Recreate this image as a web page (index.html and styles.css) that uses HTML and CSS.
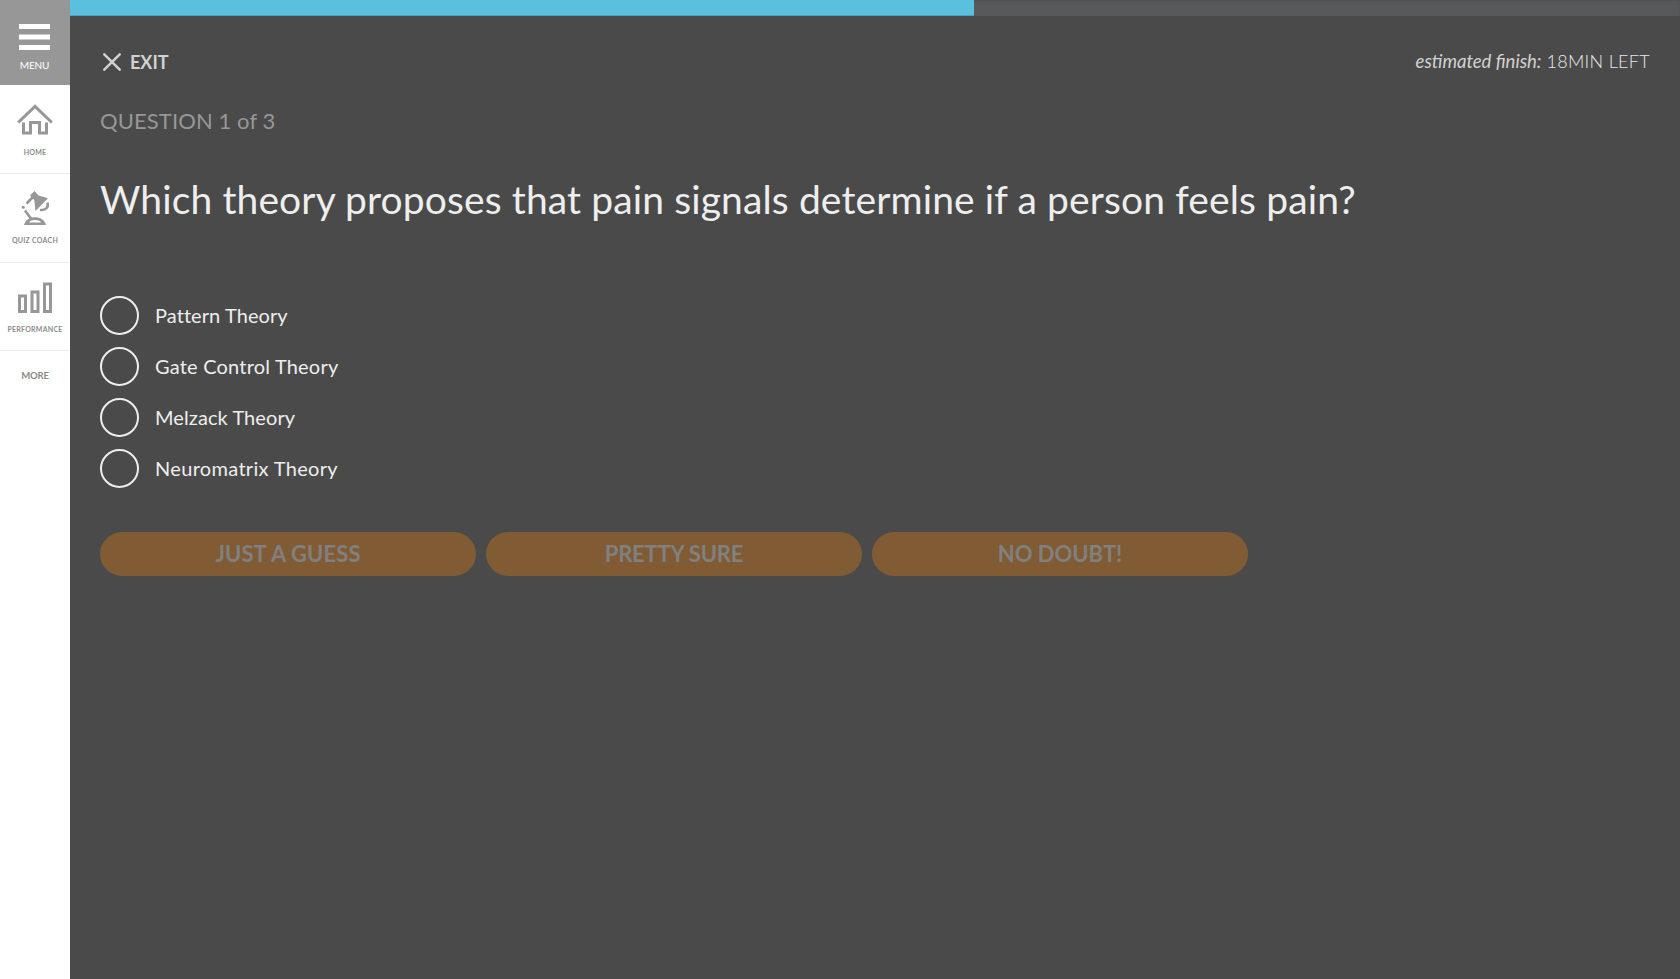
FILE: index.html
```
<!DOCTYPE html>
<html lang="en">
<head>
<meta charset="utf-8">
<title>Quiz</title>
<link rel="stylesheet" href="styles.css">
</head>
<body>
<div class="app">
  <nav class="sidebar">
    <a class="menu">
      <svg width="31" height="27" viewBox="0 0 31 27"><path d="M0 0h31v5H0zM0 10.500h31v5H0zM0 21h31v5H0z" fill="#fff"/></svg>
      <span class="menu-label">MENU</span>
    </a>
    <a class="item item-home">
      <svg width="36" height="32" viewBox="0 0 36 32" fill="none" stroke="#979797" stroke-width="3"><path d="M1.200 18.500 18 2.300 34.800 18.500"/><path d="M6.500 18.500v10.500h7V18.500h9V29h7V18.500"/></svg>
      <span class="item-label">HOME</span>
    </a>
    <a class="item item-coach">
      <svg width="36" height="36" viewBox="0 0 36 36" fill="none" stroke="#979797"><path d="M13 4.500 17.500 0l4 4.500L31 7.200 18.500 20 17.300 9z" fill="#979797" stroke="none"/><path d="M15.500 6.500 9.500 12.500" stroke-width="2.600"/><circle cx="6.200" cy="16.300" r="1.500" fill="#979797" stroke="none"/><path d="M8 19.500 14 27.500" stroke-width="2.600"/><path d="M30.500 11.500c1.500 5-2 8-7.500 7.500" stroke-width="2.500"/><path d="M7 34C9 23.500 27 23.500 29 34z" fill="#979797" stroke="none"/><path d="M12 31.500c2.500-3.200 9.500-3.200 12 0z" fill="#fff" stroke="none"/></svg>
      <span class="item-label">QUIZ COACH</span>
    </a>
    <a class="item">
      <svg width="36" height="32" viewBox="0 0 36 32" fill="none" stroke="#979797" stroke-width="3"><path d="M2.500 14h6v15.500h-6zM15 10h6v19.500h-6zM27.500 2h6v27.500h-6z"/></svg>
      <span class="item-label">PERFORMANCE</span>
    </a>
    <a class="more">MORE</a>
  </nav>
  <main class="main">
    <div class="progress"><div class="bar" style="width:56.150%"></div></div>
    <header class="top">
      <a class="exit"><svg width="18" height="18" viewBox="0 0 18 18" stroke="#d2d2d2" stroke-width="2.500" stroke-linecap="round"><path d="M1.300 1.300 16.700 16.700M16.700 1.300 1.300 16.700"/></svg><span class="exit-label">EXIT</span></a>
      <div class="finish"><em class="estimate">estimated finish:</em><span class="left">18MIN LEFT</span></div>
    </header>
    <div class="count">QUESTION 1 of 3</div>
    <h1 class="question">Which theory proposes that pain signals determine if a person feels pain?</h1>
    <ul class="options">
      <li><i class="radio"></i><span class="pattern">Pattern Theory</span></li>
      <li><i class="radio"></i><span class="gate">Gate Control Theory</span></li>
      <li><i class="radio"></i><span class="melzack">Melzack Theory</span></li>
      <li><i class="radio"></i><span class="neuromatrix">Neuromatrix Theory</span></li>
    </ul>
    <div class="actions">
      <button class="guess">JUST A GUESS</button>
      <button class="sure">PRETTY SURE</button>
      <button class="certain">NO DOUBT!</button>
    </div>
  </main>
</div>
</body>
</html>
```
FILE: styles.css
```
* { box-sizing: border-box; }
body { margin: 0; font-family: Lato, "Open Sans", sans-serif; background: #4a4a4a; }
.app { display: flex; height: 979px; overflow: hidden; }
.sidebar { width: 70px; flex: none; background: #fff; display: flex; flex-direction: column; color: #8b8b8b; }
.menu { height: 85px; background: #979797; display: flex; flex-direction: column; align-items: center; padding: 24px 1px 0 0; color: #fff; }
.menu-label { font-size: 10px; line-height: 12px; margin-top: 8px; letter-spacing: -.2px; }
.item { height: 88.500px; border-bottom: 1px solid #ebebeb; display: flex; flex-direction: column; align-items: center; justify-content: space-between; padding: 19px 0 16.500px; }
.item-home { height: 89px; }
.item-coach { padding-top: 17px; }
.item-label { font-size: 7px; line-height: 10px; font-weight: 700; letter-spacing: .25px; white-space: nowrap; }
.more { font-size: 9.500px; line-height: 12px; text-align: center; padding-top: 19px; font-weight: 700; letter-spacing: -.2px; }
.main { flex: 1; min-width: 0; }
.progress { height: 16px; background: #58595b; box-shadow: inset 0 1px 2px rgba(0,0,0,.1); }
.bar { height: 16px; background: #5bc0de; box-shadow: inset 0 -1px 0 rgba(0,0,0,.15); }
.top { display: flex; justify-content: space-between; padding: 36px 30px 0 33px; height: 84px; color: #d2d2d2; }
.exit { display: flex; gap: 9px; height: 20px; align-items: center; }
.exit-label { font-size: 18px; line-height: 20px; font-weight: 700; }
.finish { display: flex; align-items: baseline; height: 20px; gap: 5px; margin-top: -1px; line-height: 20px; }
.estimate { font-size: 18.500px; }
.left { font-size: 18px; font-weight: 300; letter-spacing: .3px; color: #e8e8e8; }
.count { padding: 7px 30px 0; font-size: 22px; line-height: 28px; letter-spacing: .1px; color: #979797; }
.question { margin: 0; padding: 40px 30px 0; font-size: 39px; line-height: 48px; font-weight: 400; letter-spacing: .12px; color: #eee; white-space: nowrap; }
.options { list-style: none; margin: 0; padding: 72.500px 30px 0; }
.options li { display: flex; align-items: center; gap: 16px; height: 39px; margin-bottom: 12.330px; font-size: 20px; color: #eee; }
.options span { padding-bottom: 1px; }
.pattern { letter-spacing: .08px; }
.gate { letter-spacing: .2px; }
.melzack { letter-spacing: .08px; }
.neuromatrix { letter-spacing: .32px; }
.radio { width: 39px; height: 39px; border: 2px solid #eee; border-radius: 50%; }
.actions { display: flex; gap: 10px; padding: 31.200px 30px 0; }
.actions button { width: 376px; height: 44px; border: 0; border-radius: 22px; background: #815b34; color: #808080; font: 700 22px/44px Lato, sans-serif; padding: 0; }
.actions .guess { letter-spacing: .1px; }
.actions .sure { letter-spacing: -.2px; }
```
